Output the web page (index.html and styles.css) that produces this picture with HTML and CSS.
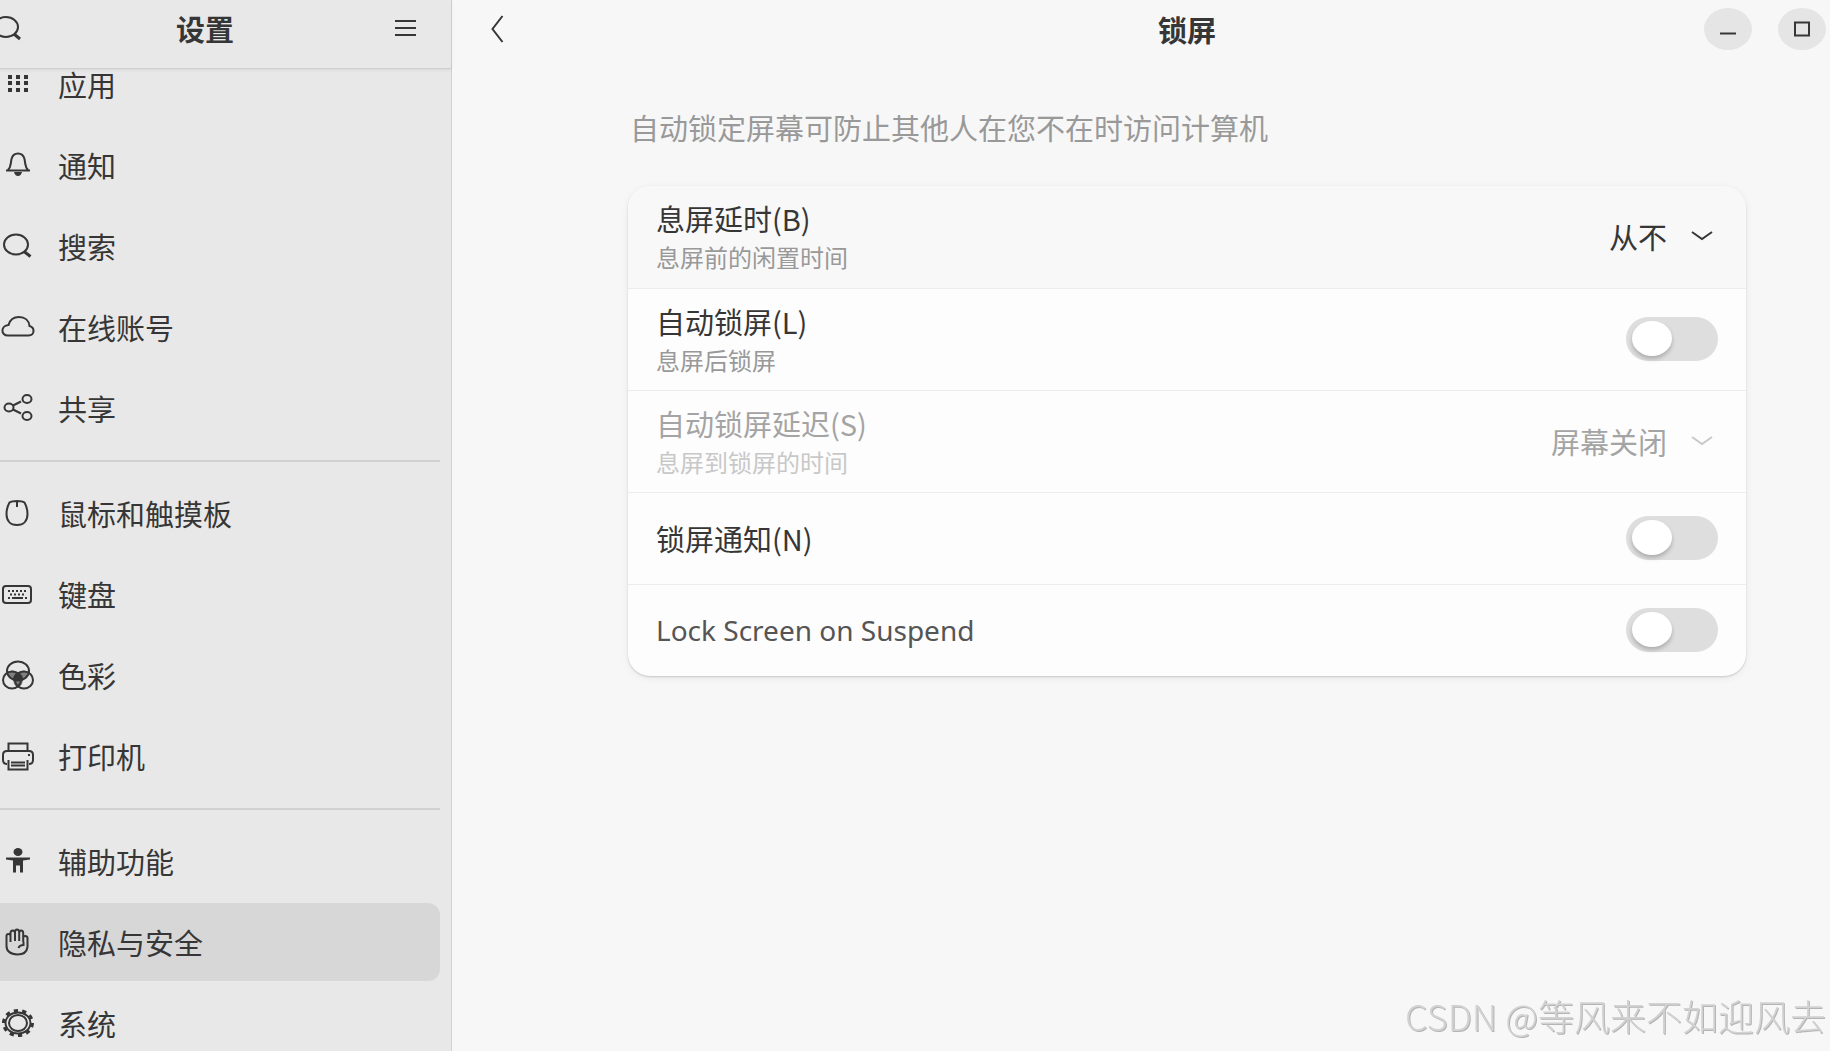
FILE: index.html
```html
<!DOCTYPE html>
<html lang="zh-CN">
<head>
<meta charset="utf-8">
<meta name="viewport" content="width=device-width, initial-scale=1">
<title>设置</title>
<link rel="stylesheet" href="styles.css">
</head>
<body>
<div class="window">
  <aside class="sidebar">
    <header class="sidebar-header">
      <button class="icon-button" type="button" aria-label="搜索">
        <svg width="28" height="28" viewBox="0 0 28 28"><ellipse cx="12" cy="13" rx="12" ry="10"/><path class="thick" d="M20 20l6 5"/></svg>
      </button>
      <h1 class="title">设置</h1>
      <button class="icon-button icon-button-end" type="button" aria-label="菜单">
        <svg width="22" height="28" viewBox="0 0 22 28"><path d="M1 7h21M1 14h21M1 21h21"/></svg>
      </button>
    </header>
    <nav class="nav">
      <ul class="nav-group">
        <li><a class="nav-item" href="#apps">
          <svg class="nav-icon" viewBox="0 0 36 32"><path class="solid" d="M8 7h4v4H8zM16 7h4v4h-4zM24 7h4v4h-4zM8 13h4v4H8zM16 13h4v4h-4zM24 13h4v4h-4zM8 20h4v4H8zM16 20h4v4h-4zM24 20h4v4h-4z"/></svg>
          <span>应用</span></a></li>
        <li><a class="nav-item" href="#notifications">
          <svg class="nav-icon" viewBox="0 0 36 32"><path d="M6 21.500h24M8 21c3-3 2.500-6 3.500-11 1-4 3-5.500 6.500-5.500s5.500 1.500 6.500 5.500c1 5 .5 8 3.500 11"/><path class="solid" d="M14 23h8q-1 4-4 4t-4-4z"/></svg>
          <span>通知</span></a></li>
        <li><a class="nav-item" href="#search">
          <svg class="nav-icon" viewBox="0 0 36 32"><ellipse cx="16" cy="14.500" rx="12" ry="10"/><path class="thick" d="M24 21.500l6.500 5"/></svg>
          <span>搜索</span></a></li>
        <li><a class="nav-item" href="#accounts">
          <svg class="nav-icon" viewBox="0 0 36 32"><path d="M8 24.500c-7.500 0-7.500-10 .5-10.500C10 8.500 14 6 19 6c6 0 10 3.500 10.500 9 5.500 1.500 5.500 9.500-1 9.500z"/></svg>
          <span>在线账号</span></a></li>
        <li><a class="nav-item" href="#sharing">
          <svg class="nav-icon" viewBox="0 0 36 32"><ellipse cx="9" cy="15.500" rx="4.500" ry="4"/><ellipse cx="27" cy="7" rx="4.500" ry="4"/><ellipse cx="27" cy="24" rx="4.500" ry="4"/><path d="M13 13.500l8-4M13 17.500l8 4"/></svg>
          <span>共享</span></a></li>
      </ul>
      <ul class="nav-group">
        <li><a class="nav-item" href="#mouse">
          <svg class="nav-icon" viewBox="0 0 36 32"><path d="M17 4c4 0 6 .5 7.500 1.500C26.500 9 27.500 13 27.500 17c0 7-4 11-10.500 11S6.500 24 6.500 17c0-4 1-8 3-11.500C11 4.500 13 4 17 4zM17 4v6"/></svg>
          <span>鼠标和触摸板</span></a></li>
        <li><a class="nav-item" href="#keyboard">
          <svg class="nav-icon" viewBox="0 0 36 32"><rect x="3" y="8" width="28" height="17" rx="3"/><path d="M8 13h2m2 0h2m2 0h2m2 0h2m2 0h2M10 16.500h2m2 0h2m2 0h2m2 0h2M8 20h2m2 0h11m2 0h2"/></svg>
          <span>键盘</span></a></li>
        <li><a class="nav-item" href="#color">
          <svg class="nav-icon" viewBox="0 0 36 32">
            <path class="mid" d="M8 13q5-3 10 0 5-3 10 0-1 6-5 8-1 6-5 8-4-2-5-8-4-2-5-8z"/>
            <ellipse cx="18" cy="12" rx="11" ry="9.500"/><ellipse cx="12" cy="21" rx="9" ry="8.500"/><ellipse cx="24" cy="21" rx="9" ry="8.500"/>
            <path class="solid" d="M18 13q5 3 5 7-5 3-10 0 0-4 5-7z"/></svg>
          <span>色彩</span></a></li>
        <li><a class="nav-item" href="#printers">
          <svg class="nav-icon" viewBox="0 0 36 32"><path d="M8.500 11V3.500h19V11M7 24c-3 0-4-2-4-4v-5c0-3 1.500-4 4-4h22c2.500 0 4 1 4 4v5c0 2-1 4-4 4M8.500 20v9.500h19V20M11 22.500h14M11 25.500h14"/><path class="solid" d="M28 14h2v2h-2z"/></svg>
          <span>打印机</span></a></li>
      </ul>
      <ul class="nav-group">
        <li><a class="nav-item" href="#accessibility">
          <svg class="nav-icon" viewBox="0 0 36 32"><ellipse class="solid" cx="18" cy="7" rx="4.500" ry="4"/><path class="solid" d="M6 12.500h24v2l-7 1v12h-3v-7h-4v7h-3v-12l-7-1z"/></svg>
          <span>辅助功能</span></a></li>
        <li><a class="nav-item nav-item-active" href="#privacy" aria-current="page">
          <svg class="nav-icon" viewBox="0 0 36 32"><path d="M6.500 20V10q0-2 2-2t2 2v6-9q0-2.500 2.200-2.500T15 7v8V6q0-2.500 2-2.500T19.200 6v9V7q0-2.500 2-2.500t2 2.500v9-4q0-2 2-2t2.300 2v9q-1 7.500-10 7.500Q6.500 28 6.500 20zM23.500 16v3q-4 0-5 3"/></svg>
          <span>隐私与安全</span></a></li>
        <li><a class="nav-item" href="#system">
          <svg class="nav-icon" viewBox="0 0 36 32"><ellipse class="teeth" cx="18" cy="16" rx="14.500" ry="12.500" pathLength="80"/><ellipse cx="18" cy="16" rx="12.500" ry="10.500"/><ellipse cx="18" cy="16" rx="9" ry="8"/></svg>
          <span>系统</span></a></li>
      </ul>
    </nav>
  </aside>

  <main class="main">
    <header class="main-header">
      <button class="icon-button back-button" type="button" aria-label="返回">
        <svg width="14" height="30" viewBox="0 0 14 30"><path d="M11.500 2L1.500 15l10 13"/></svg>
      </button>
      <h2 class="title">锁屏</h2>
      <div class="window-controls">
        <button class="window-button" type="button" aria-label="最小化">
          <svg width="16" height="16" viewBox="0 0 16 16"><path d="M0 12.500h16"/></svg>
        </button>
        <button class="window-button" type="button" aria-label="最大化">
          <svg width="16" height="16" viewBox="0 0 16 16"><rect x="1" y="1.500" width="14" height="13"/></svg>
        </button>
      </div>
    </header>
    <section class="content">
      <p class="intro">自动锁定屏幕可防止其他人在您不在时访问计算机</p>
      <div class="card">
        <div class="row row-tall row-hover">
          <label class="row-text" for="blank-delay"><span class="row-title">息屏延时(B)</span><span class="row-subtitle">息屏前的闲置时间</span></label>
          <div class="dropdown">
            <select id="blank-delay"><option>从不</option></select>
            <svg class="chevron" viewBox="0 0 22 12"><path d="M1 2l10 7 10-7"/></svg>
          </div>
        </div>
        <div class="row row-tall">
          <label class="row-text" for="auto-lock"><span class="row-title">自动锁屏(L)</span><span class="row-subtitle">息屏后锁屏</span></label>
          <input class="switch" type="checkbox" role="switch" id="auto-lock">
        </div>
        <div class="row row-tall row-disabled">
          <label class="row-text" for="lock-delay"><span class="row-title">自动锁屏延迟(S)</span><span class="row-subtitle">息屏到锁屏的时间</span></label>
          <div class="dropdown">
            <select id="lock-delay" disabled><option>屏幕关闭</option></select>
            <svg class="chevron" viewBox="0 0 22 12"><path d="M1 2l10 7 10-7"/></svg>
          </div>
        </div>
        <div class="row">
          <label class="row-text" for="lock-notify"><span class="row-title">锁屏通知(N)</span></label>
          <input class="switch" type="checkbox" role="switch" id="lock-notify">
        </div>
        <div class="row">
          <label class="row-text" for="lock-suspend"><span class="row-title row-title-latin">Lock Screen on Suspend</span></label>
          <input class="switch" type="checkbox" role="switch" id="lock-suspend">
        </div>
      </div>
    </section>
  </main>
</div>
<div class="watermark">CSDN @等风来不如迎风去</div>
</body>
</html>
```
FILE: styles.css
```css
:root {
  --text: #363636;
  --muted: #999;
  --bg: #f7f7f7;
  --sidebar: #e8e8e8;
  --line: #ececec;
}

* {
  box-sizing: border-box;
}

body {
  margin: 0;
  background: var(--bg);
  color: var(--text);
  font-family: "Noto Sans CJK SC", "Noto Sans", sans-serif;
  font-size: 29px;
  line-height: 42px;
  overflow: hidden;
}

button {
  padding: 0;
  border: 0;
  background: none;
  color: inherit;
  cursor: pointer;
}

svg {
  display: block;
  fill: none;
  stroke: currentColor;
  stroke-width: 2;
}

.thick {
  stroke-width: 3;
}

.solid {
  fill: currentColor;
  stroke: none;
}

.mid {
  fill: #808080;
  stroke: none;
}

.teeth {
  stroke-width: 3;
  stroke-dasharray: 4 4;
}

.window {
  display: flex;
  height: 100vh;
  overflow: hidden;
}

/* Sidebar */

.sidebar {
  flex: none;
  width: 452px;
  background: var(--sidebar);
  border-right: 1px solid #d2d2d2;
}

.sidebar-header {
  position: relative;
  z-index: 1;
  display: grid;
  grid-template-columns: 1fr auto 1fr;
  align-items: center;
  height: 69px;
  margin-left: -6px;
  padding: 0 35px 12px 0;
  background: var(--sidebar);
  border-bottom: 1px solid #cfcfcf;
  box-shadow: 0 1px 3px rgba(0, 0, 0, 0.08);
}

.icon-button {
  justify-self: start;
}

.icon-button-end {
  justify-self: end;
}

.title {
  margin: 0;
  font-size: 29px;
  font-weight: 700;
}

/* The list is scrolled part of a row under the header */
.nav {
  margin-top: -24px;
  padding-right: 11px;
}

.nav-group {
  display: flex;
  flex-direction: column;
  gap: 3px;
  margin: 0;
  padding: 0;
  list-style: none;
}

.nav-group + .nav-group {
  margin-top: 13px;
  padding-top: 12px;
  border-top: 2px solid #d0d0d0;
}

.nav-item {
  display: flex;
  align-items: center;
  gap: 22px;
  height: 78px;
  border-radius: 0 12px 12px 0;
  color: inherit;
  text-decoration: none;
}

.nav-item-active {
  background: #d7d7d7;
}

.nav-icon {
  width: 36px;
  height: 32px;
}

/* Main pane */

.main {
  flex: 1;
  min-width: 0;
  margin-right: -92px;
}

.main-header {
  display: grid;
  grid-template-columns: 1fr auto 1fr;
  align-items: center;
  height: 69px;
  padding-bottom: 12px;
}

.back-button {
  margin-left: 39px;
}

.window-controls {
  display: flex;
  gap: 26px;
  justify-self: end;
  margin-right: 96px;
}

.window-button {
  display: grid;
  place-items: center;
  width: 48px;
  height: 42px;
  border-radius: 50%;
  background: #e5e5e5;
}

.content {
  max-width: 1118px;
  margin: 0 auto;
  padding-top: 37px;
}

.intro {
  margin: 0 0 38px;
  padding-left: 2px;
  color: var(--muted);
}

.card {
  border-radius: 22px;
  background: #fdfdfd;
  box-shadow: 0 1px 2px rgba(0, 0, 0, 0.16), 0 2px 8px rgba(0, 0, 0, 0.06);
  overflow: hidden;
}

.row {
  display: flex;
  align-items: center;
  justify-content: space-between;
  min-height: 92px;
  padding: 0 28px 2px;
}

.row-tall {
  min-height: 102px;
}

.row + .row {
  border-top: 1px solid var(--line);
}

.row-hover {
  background: #f8f8f8;
}

.row-text {
  display: flex;
  flex-direction: column;
}

.row-title-latin {
  font-family: "Noto Sans", sans-serif;
  font-size: 28px;
  color: #555;
}

.row-subtitle {
  color: var(--muted);
  font-size: 24px;
  line-height: 36px;
}

.row-disabled,
.row-disabled select {
  color: #a4a4a4;
}

.row-disabled .row-subtitle,
.row-disabled .chevron {
  color: #c8c8c8;
}

.dropdown {
  display: grid;
  align-items: center;
}

.dropdown select,
.chevron {
  grid-area: 1 / 1;
}

.dropdown select {
  appearance: none;
  padding: 0 50px 0 0;
  border: 0;
  background: none;
  color: inherit;
  font: inherit;
  opacity: 1;
}

.chevron {
  justify-self: end;
  width: 22px;
  height: 12px;
  margin-right: 5px;
  pointer-events: none;
}

.switch {
  appearance: none;
  display: flex;
  align-items: center;
  width: 92px;
  height: 44px;
  margin: 0;
  padding: 0 6px;
  border-radius: 22px;
  background: #dedede;
}

.switch::before {
  content: "";
  width: 40px;
  height: 35px;
  border-radius: 50%;
  background: #fff;
  box-shadow: 0 3px 4px rgba(0, 0, 0, 0.22);
}

.switch:checked {
  justify-content: flex-end;
  background: #e95420;
}

.watermark {
  position: fixed;
  right: 4px;
  bottom: 10px;
  color: #d2d2d2;
  font-size: 36px;
  font-weight: 300;
  line-height: 52px;
  text-shadow: 1px 1px 0 #b4b4b4;
}
```
